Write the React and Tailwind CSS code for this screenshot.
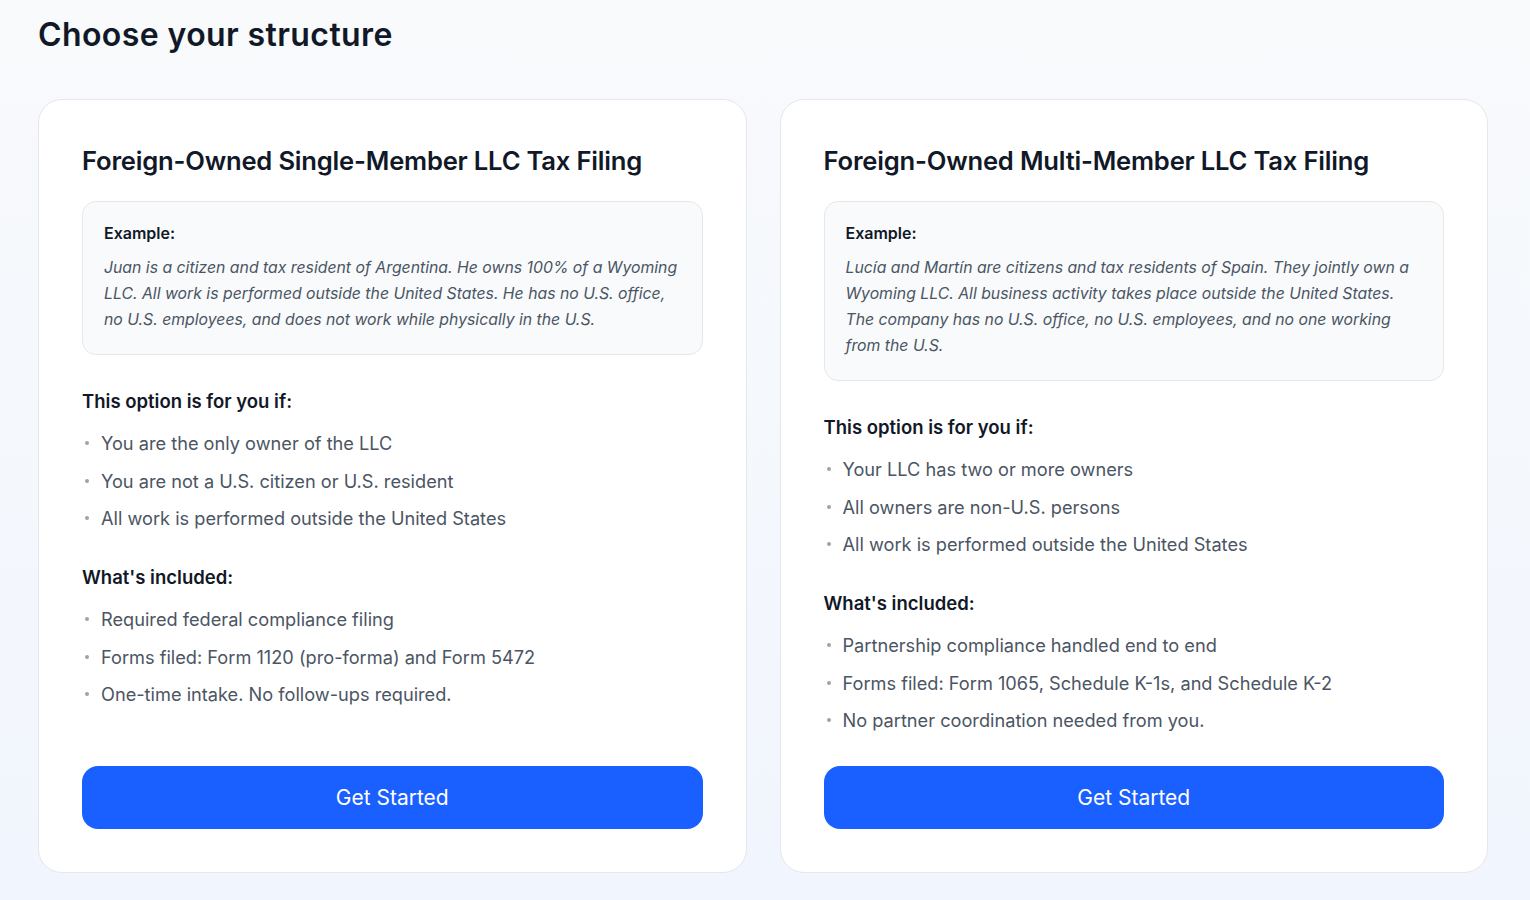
import React from 'react';

const plans = [
  {
    title: 'Foreign-Owned Single-Member LLC Tax Filing',
    example:
      'Juan is a citizen and tax resident of Argentina. He owns 100% of a Wyoming LLC. All work is performed outside the United States. He has no U.S. office, no U.S. employees, and does not work while physically in the U.S.',
    forYou: [
      'You are the only owner of the LLC',
      'You are not a U.S. citizen or U.S. resident',
      'All work is performed outside the United States',
    ],
    included: [
      'Required federal compliance filing',
      'Forms filed: Form 1120 (pro-forma) and Form 5472',
      'One-time intake. No follow-ups required.',
    ],
  },
  {
    title: 'Foreign-Owned Multi-Member LLC Tax Filing',
    example:
      'Lucía and Martín are citizens and tax residents of Spain. They jointly own a Wyoming LLC. All business activity takes place outside the United States. The company has no U.S. office, no U.S. employees, and no one working from the U.S.',
    forYou: [
      'Your LLC has two or more owners',
      'All owners are non-U.S. persons',
      'All work is performed outside the United States',
    ],
    included: [
      'Partnership compliance handled end to end',
      'Forms filed: Form 1065, Schedule K-1s, and Schedule K-2',
      'No partner coordination needed from you.',
    ],
  },
];

const BulletList = ({ items }) => (
  <ul className="mt-[15px] flex flex-col gap-[9.5px]">
    {items.map((item) => (
      <li key={item} className="flex items-center text-[18.2px] leading-[28px] text-[#4b5563]">
        <span className="ml-[3px] mr-[12px] h-[4px] w-[4px] shrink-0 rounded-full bg-[#9ca3af]" />
        {item}
      </li>
    ))}
  </ul>
);

const PlanCard = ({ plan }) => (
  <div className="flex flex-col rounded-3xl border border-[#e5e7eb] bg-white px-[43px] pt-[45px] pb-[43px]">
    <h2 className="text-[25.6px] font-semibold leading-[32px] tracking-[-0.2px] text-[#111827]">{plan.title}</h2>

    <div className="mt-[24px] rounded-[14px] border border-[#e5e7eb] bg-[#f8fafc] pl-[21px] pr-[24px] pt-[20px] pb-[21px]">
      <p className="text-[16px] font-semibold leading-[22px] text-[#111827]">Example:</p>
      <p className="mt-[11px] text-[15.8px] italic leading-[26px] text-[#4b5563]">{plan.example}</p>
    </div>

    <h3 className="mt-[33px] text-[18.5px] font-semibold leading-[26px] text-[#111827]">This option is for you if:</h3>
    <BulletList items={plan.forYou} />

    <h3 className="mt-[32px] text-[18.5px] font-semibold leading-[26px] text-[#111827]">What's included:</h3>
    <BulletList items={plan.included} />

    <div className="mt-auto pt-[32px]">
      <button className="flex h-[63px] w-full items-center justify-center rounded-2xl bg-[#1a5fff] text-[21px] font-normal text-white">
        Get Started
      </button>
    </div>
  </div>
);

export default function App() {
  return (
    <div
      className="min-h-[900px] bg-gradient-to-b from-[#f8fafc] to-[#f1f5fd] px-[38px] pt-[14px] pb-[28px]"
      style={{ fontFamily: 'Inter, "Noto Sans", sans-serif' }}
    >
      <h1 className="text-[32px] font-semibold leading-[42px] tracking-[0.4px] text-[#111827]">Choose your structure</h1>
      <div className="mt-[43px] grid w-[1450px] grid-cols-2 gap-[33px]">
        {plans.map((plan) => (
          <PlanCard key={plan.title} plan={plan} />
        ))}
      </div>
    </div>
  );
}
